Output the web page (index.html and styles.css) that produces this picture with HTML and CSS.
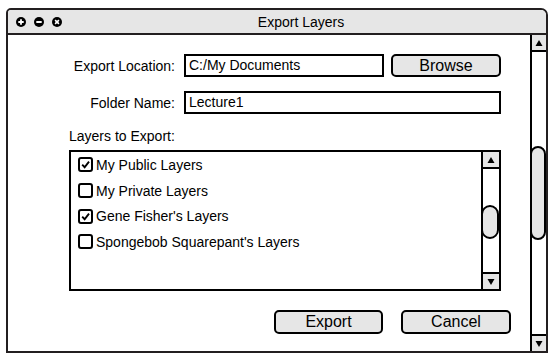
FILE: index.html
```html
<!DOCTYPE html>
<html>
<head>
<meta charset="utf-8">
<link rel="stylesheet" href="styles.css">
</head>
<body>
<div class="window">
  <div class="titlebar">
    <div class="wicons">
      <svg class="wicon" viewBox="0 0 10 10"><circle cx="5" cy="5" r="5" fill="#000"/><path d="M5 2.3V7.7M2.3 5H7.7" stroke="#fff" stroke-width="1.8"/></svg>
      <svg class="wicon" viewBox="0 0 10 10"><circle cx="5" cy="5" r="5" fill="#000"/><path d="M2.3 5H7.7" stroke="#fff" stroke-width="1.8"/></svg>
      <svg class="wicon" viewBox="0 0 10 10"><circle cx="5" cy="5" r="5" fill="#000"/><path d="M3.1 3.1L6.9 6.9M6.9 3.1L3.1 6.9" stroke="#fff" stroke-width="1.6"/></svg>
    </div>
    <div class="title">Export Layers</div>
  </div>
  <div class="wbody">
    <div class="main">
      <div class="row row1">
        <label class="lbl">Export Location:</label>
        <div class="input w1">C:/My Documents</div>
        <div class="btn browse">Browse</div>
      </div>
      <div class="row row2">
        <label class="lbl">Folder Name:</label>
        <div class="input w2">Lecture1</div>
      </div>
      <div class="section">Layers to Export:</div>
      <div class="listbox">
        <div class="items">
          <div class="item"><span class="cb"><svg viewBox="0 0 10 10"><path d="M2 5.2L4.2 7.5L8.2 2.4" fill="none" stroke="#000" stroke-width="1.7"/></svg></span>My Public Layers</div>
          <div class="item"><span class="cb"></span>My Private Layers</div>
          <div class="item"><span class="cb"><svg viewBox="0 0 10 10"><path d="M2 5.2L4.2 7.5L8.2 2.4" fill="none" stroke="#000" stroke-width="1.7"/></svg></span>Gene Fisher's Layers</div>
          <div class="item"><span class="cb"></span>Spongebob Squarepant's Layers</div>
        </div>
        <div class="vscroll small">
          <div class="arrow up"><svg viewBox="0 0 10 10"><path d="M1.5 8H8.5L5 2Z" fill="#000"/></svg></div>
          <div class="track">
            <div class="thumb thumb-small"></div>
          </div>
          <div class="arrow down"><svg viewBox="0 0 10 10"><path d="M1.5 2H8.5L5 8Z" fill="#000"/></svg></div>
        </div>
      </div>
      <div class="actions">
        <div class="btn export">Export</div>
        <div class="btn cancel">Cancel</div>
      </div>
    </div>
    <div class="vscroll big">
      <div class="arrow up"><svg viewBox="0 0 10 10"><path d="M1.5 8H8.5L5 2Z" fill="#000"/></svg></div>
      <div class="track">
        <div class="thumb thumb-big"></div>
      </div>
      <div class="arrow down"><svg viewBox="0 0 10 10"><path d="M1.5 2H8.5L5 8Z" fill="#000"/></svg></div>
    </div>
  </div>
</div>
</body>
</html>
```

FILE: styles.css
```css
* { box-sizing: border-box; }
html, body { margin: 0; padding: 0; background: #fff; }
body {
  font-family: "Liberation Sans", Arial, sans-serif;
  font-size: 14px;
  color: #000;
}
.window {
  margin: 8px 0 0 6px;
  width: 542px;
  height: 345px;
  border: 2px solid #231f20;
  border-radius: 5px 7px 0 0;
  display: flex;
  flex-direction: column;
  overflow: hidden;
}
.titlebar {
  height: 25px;
  flex: none;
  background: #e6e6e6;
  border-bottom: 2px solid #231f20;
  display: flex;
  align-items: center;
}
.wicons {
  display: flex;
  gap: 8px;
  padding-left: 8px;
  width: 66px;
}
.wicon { width: 10px; height: 10px; display: block; }
.title {
  flex: 1;
  text-align: center;
  padding-right: 18px;
  line-height: 16px;
}
.wbody {
  flex: 1;
  display: flex;
  min-height: 0;
}
.main {
  flex: 1;
  display: flex;
  flex-direction: column;
  padding-top: 19px;
}
.row {
  display: flex;
  align-items: center;
  height: 23px;
}
.row2 { margin-top: 14px; }
.lbl {
  width: 167px;
  text-align: right;
  margin-right: 9px;
}
.input {
  height: 23px;
  border: 2px solid #000;
  padding-left: 3px;
  line-height: 19px;
}
.w1 { width: 200px; }
.w2 { width: 317px; }
.btn {
  height: 23px;
  border: 2px solid #000;
  border-radius: 5px;
  background: #e6e6e6;
  text-align: center;
  line-height: 19px;
  font-size: 16px;
}
.browse { width: 110px; margin-left: 7px; }
.section {
  margin: 14px 0 0 61px;
  line-height: 16px;
}
.listbox {
  margin: 6px 0 0 61px;
  width: 432px;
  height: 141px;
  border: 2px solid #000;
  display: flex;
}
.items {
  flex: 1;
  padding-top: 0;
  padding-left: 7px;
}
.item {
  height: 25.7px;
  display: flex;
  align-items: center;
}
.cb {
  width: 15px;
  height: 15px;
  border: 2px solid #000;
  border-radius: 3px;
  margin-right: 3px;
  display: flex;
  align-items: center;
  justify-content: center;
  flex: none;
}
.cb svg { width: 11px; height: 11px; display: block; }
.vscroll {
  display: flex;
  flex-direction: column;
  border-left: 2px solid #000;
  flex: none;
}
.vscroll.small { width: 18px; }
.vscroll.big { width: 16px; }
.arrow {
  background: #e6e6e6;
  height: 17px;
  display: flex;
  align-items: center;
  justify-content: center;
  flex: none;
}
.arrow.up { border-bottom: 2px solid #000; }
.arrow.down { border-top: 2px solid #000; }
.arrow svg { width: 10px; height: 10px; display: block; }
.track {
  flex: 1;
  position: relative;
  background: #fff;
}
.thumb {
  position: absolute;
  left: -2px;
  right: 0;
  background: #e6e6e6;
  border: 2px solid #000;
  border-radius: 9px;
}
.thumb-small { top: 36px; height: 34px; }
.thumb-big { top: 94px; height: 94px; }
.actions {
  display: flex;
  justify-content: flex-end;
  gap: 18px;
  padding-right: 19px;
  margin-top: 19px;
}
.export { width: 109px; height: 24px; line-height: 20px; }
.cancel { width: 110px; height: 24px; line-height: 20px; }
```
